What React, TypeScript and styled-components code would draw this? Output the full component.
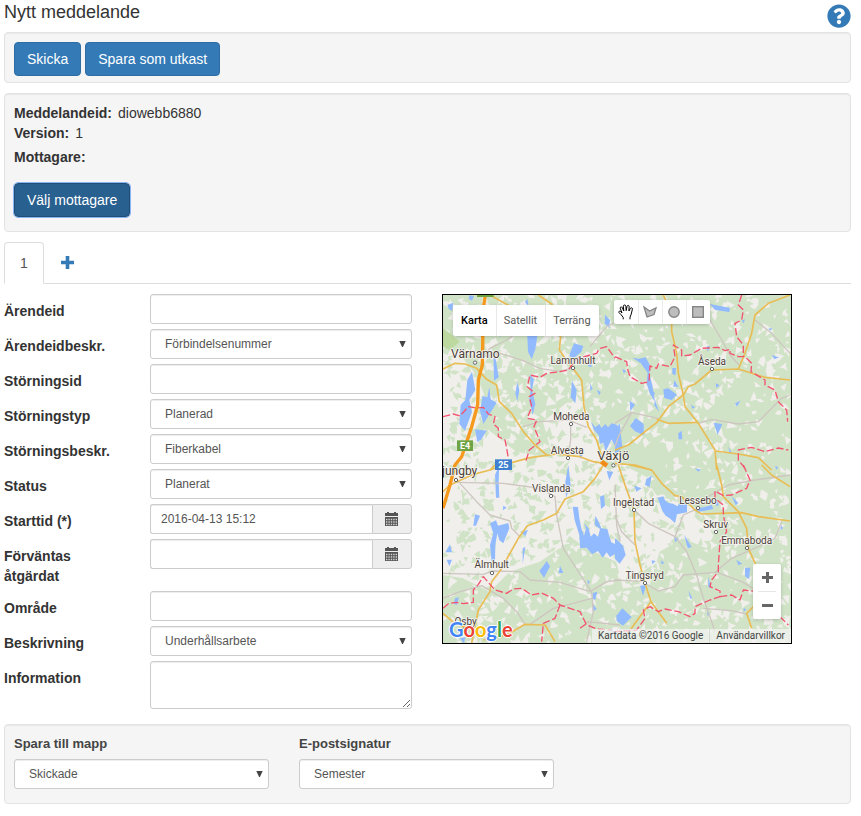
import React, { useId } from "react";
import styled, { createGlobalStyle } from "styled-components";
import { FaQuestionCircle } from "react-icons/fa";

const GlobalStyle = createGlobalStyle`
  *, *::before, *::after { box-sizing: border-box; }
  body {
    margin: 0;
    background: #fff;
    color: #333;
    font-family: "Liberation Sans", Arial, sans-serif;
    font-size: 14px;
    line-height: 20px;
  }
`;

/* ---------- page parts ---------- */

const Page = styled.main`
  padding: 0 10px 12px 4px;
`;

const Header = styled.header`
  display: flex;
  justify-content: space-between;
  align-items: flex-start;
  height: 32px;
`;

const Title = styled.h1`
  margin: 0;
  font-size: 18px;
  line-height: 24px;
  font-weight: 400;
`;

const HelpButton = styled.button`
  display: flex;
  margin: 4px 0 0;
  padding: 0;
  border: 0;
  background: none;
  color: #337ab7;
  font-size: 24px;
`;

const Well = styled.section<{ $bottom: number }>`
  margin-bottom: 10px;
  padding: 9px 9px ${(p) => p.$bottom}px;
  border: 1px solid #e3e3e3;
  border-radius: 4px;
  background: #f5f5f5;
  box-shadow: inset 0 1px 1px rgba(0, 0, 0, 0.05);
`;

const ButtonRow = styled.div`
  display: flex;
  gap: 4px;
`;

const Button = styled.button<{ $active?: boolean }>`
  height: 34px;
  padding: 0 12px;
  border: 1px solid ${(p) => (p.$active ? "#204d74" : "#2e6da4")};
  border-radius: 4px;
  background: ${(p) => (p.$active ? "#286090" : "#337ab7")};
  color: #fff;
  font: inherit;
  ${(p) => p.$active && "outline: 1px solid #8ab4f8;"}
`;

const Facts = styled.dl`
  margin: 0 0 16px;
`;

const Fact = styled.div<{ $spaced?: boolean }>`
  display: flex;
  gap: 6px;
  margin-top: ${(p) => (p.$spaced ? 4 : 0)}px;

  dt { font-weight: 700; }
  dd { margin: 0; }
`;

const Tabs = styled.nav`
  display: flex;
  align-items: flex-end;
  height: 42px;
  margin-bottom: 10px;
  border-bottom: 1px solid #ddd;
`;

const Tab = styled.button`
  width: 40px;
  height: 42px;
  margin-bottom: -1px;
  padding: 0;
  border: 1px solid #ddd;
  border-bottom-color: #fff;
  border-radius: 4px 4px 0 0;
  background: #fff;
  color: #555;
  font: inherit;
`;

const AddTab = styled.button`
  display: flex;
  align-items: center;
  justify-content: center;
  width: 47px;
  height: 42px;
  padding: 0;
  border: 0;
  background: none;
  color: #337ab7;
`;

const Columns = styled.div`
  display: grid;
  grid-template-columns: minmax(0, 408px) minmax(0, 350px);
  gap: 30px;
  align-items: start;
  margin-bottom: 15px;
`;

const Form = styled.form`
  display: grid;
  gap: 5px;
`;

const Row = styled.div`
  display: grid;
  grid-template-columns: 110px minmax(0, 1fr);
  column-gap: 36px;
  align-items: start;
`;

const RowLabel = styled.label`
  padding-top: 7px;
  font-weight: 700;
`;

const Input = styled.input`
  display: block;
  width: 100%;
  min-width: 0;
  height: 30px;
  padding: 0 10px;
  border: 1px solid #ccc;
  border-radius: 3px;
  background: #fff;
  box-shadow: inset 0 1px 1px rgba(0, 0, 0, 0.075);
  color: #555;
  font-family: inherit;
  font-size: 12px;
`;

const TextArea = styled.textarea`
  display: block;
  width: 100%;
  height: 48px;
  padding: 5px 10px;
  border: 1px solid #ccc;
  border-radius: 3px;
  box-shadow: inset 0 1px 1px rgba(0, 0, 0, 0.075);
  color: #555;
  font-family: inherit;
  font-size: 12px;
  resize: vertical;
`;

const SelectBox = styled.div`
  position: relative;

  svg {
    position: absolute;
    top: 12px;
    right: 6px;
    pointer-events: none;
  }
`;

const SelectInput = styled.select`
  display: block;
  width: 100%;
  height: 30px;
  padding: 0 24px 0 14px;
  border: 1px solid #ccc;
  border-radius: 3px;
  appearance: none;
  background: #fff;
  box-shadow: inset 0 1px 1px rgba(0, 0, 0, 0.075);
  color: #555;
  font-family: inherit;
  font-size: 12px;
`;

const InputGroup = styled.div`
  display: flex;

  input {
    flex: 1;
    border-right: 0;
    border-radius: 3px 0 0 3px;
  }
`;

const AddOn = styled.button`
  display: flex;
  align-items: center;
  justify-content: center;
  width: 40px;
  height: 30px;
  padding: 0 2px 0 0;
  border: 1px solid #ccc;
  border-radius: 0 3px 3px 0;
  background: #eee;
  color: #555;
`;

const FooterFields = styled.div`
  display: grid;
  grid-template-columns: repeat(2, minmax(0, 255px));
  column-gap: 30px;
`;

const FooterLabel = styled.label`
  display: block;
  margin-bottom: 5px;
  color: #444;
  font-size: 13px;
  font-weight: 700;
`;

function Select({ id, value }: { id: string; value: string }) {
  return (
    <SelectBox>
      <SelectInput id={id} defaultValue={value}>
        <option>{value}</option>
      </SelectInput>
      <svg width="7" height="6" viewBox="0 0 7 6" aria-hidden="true">
        <path d="M0.3 0H6.7L3.9 6H3.1Z" fill="#444" />
      </svg>
    </SelectBox>
  );
}

function CalendarIcon() {
  return (
    <svg width="13" height="14" viewBox="0 0 13 14" aria-hidden="true">
      <path d="M0 1H2V0H4V1H9V0H11V1H13V4H0Z" fill="currentColor" />
      <path d="M0 5H13V14H0Z" fill="currentColor" />
      <path d="M1 7.5H12M1 10H12M1 12.5H12" stroke="#d4d4d4" strokeWidth="1.6" strokeDasharray="1.4 1" />
    </svg>
  );
}

type Kind = "text" | "select" | "date" | "area";

function Field({ label, kind, value = "" }: { label: string; kind: Kind; value?: string }) {
  const id = useId();
  return (
    <Row>
      <RowLabel htmlFor={id}>{label}</RowLabel>
      {kind === "text" && <Input id={id} type="text" defaultValue={value} />}
      {kind === "select" && <Select id={id} value={value} />}
      {kind === "area" && <TextArea id={id} />}
      {kind === "date" && (
        <InputGroup>
          <Input id={id} type="text" defaultValue={value} />
          <AddOn type="button" aria-label={`Välj datum: ${label}`}>
            <CalendarIcon />
          </AddOn>
        </InputGroup>
      )}
    </Row>
  );
}

const fields: { label: string; kind: Kind; value?: string }[] = [
  { label: "Ärendeid", kind: "text" },
  { label: "Ärendeidbeskr.", kind: "select", value: "Förbindelsenummer" },
  { label: "Störningsid", kind: "text" },
  { label: "Störningstyp", kind: "select", value: "Planerad" },
  { label: "Störningsbeskr.", kind: "select", value: "Fiberkabel" },
  { label: "Status", kind: "select", value: "Planerat" },
  { label: "Starttid (*)", kind: "date", value: "2016-04-13 15:12" },
  { label: "Förväntas åtgärdat", kind: "date" },
  { label: "Område", kind: "text" },
  { label: "Beskrivning", kind: "select", value: "Underhållsarbete" },
  { label: "Information", kind: "area" },
];

/* ---------- map ---------- */

const MapFrame = styled.div`
  position: relative;
  width: 100%;
  border: 1px solid #000;
  overflow: hidden;
  font-family: Roboto, "Liberation Sans", sans-serif;
`;

const MapDrawing = styled.svg`
  display: block;
  width: 100%;
  height: auto;
`;

const TownName = styled.text`
  fill: #4b3d38;
  stroke: #f5f5f0;
  stroke-width: 5px;
  stroke-linejoin: round;
  paint-order: stroke;
`;

const MapTypes = styled.div`
  position: absolute;
  top: 10px;
  left: 10px;
  display: flex;
  height: 31px;
  border-radius: 2px;
  background: #fff;
  box-shadow: 0 1px 4px -1px rgba(0, 0, 0, 0.3);
`;

const MapType = styled.button<{ $on?: boolean }>`
  padding: 0 8px;
  border: 0;
  background: none;
  color: ${(p) => (p.$on ? "#000" : "#565656")};
  font-family: inherit;
  font-size: 11px;
  font-weight: ${(p) => (p.$on ? 500 : 400)};

  & + & {
    padding-left: 7px;
    border-left: 1px solid #e8e8e8;
  }
`;

const DrawTools = styled.div`
  position: absolute;
  top: 5px;
  left: 171px;
  display: flex;
  border-radius: 2px;
  background: #fff;
  box-shadow: 0 1px 4px -1px rgba(0, 0, 0, 0.3);
`;

const DrawTool = styled.button`
  display: flex;
  align-items: center;
  justify-content: center;
  width: 24px;
  height: 24px;
  padding: 0 1px 0 0;
  border: 0;
  background: none;

  & + & { border-left: 1px solid #ececec; }
`;

const ZoomControl = styled.div`
  position: absolute;
  right: 10px;
  bottom: 24px;
  width: 28px;
  padding: 0 5px;
  border-radius: 2px;
  background: #fff;
  box-shadow: 0 1px 4px -1px rgba(0, 0, 0, 0.3);
`;

const ZoomButton = styled.button`
  display: flex;
  align-items: center;
  justify-content: center;
  width: 18px;
  height: 27px;
  padding: 0;
  border: 0;
  background: none;

  & + & { height: 28px; border-top: 1px solid #e6e6e6; }
`;

const Attribution = styled.div`
  position: absolute;
  right: 0;
  bottom: 0;
  display: flex;
  background: rgba(245, 245, 245, 0.7);
  color: #444;
  font-size: 10px;
  line-height: 14px;

  span, a { padding: 0 6px; white-space: nowrap; }
  a { border-left: 1px solid rgba(210, 210, 205, 0.8); color: #444; text-decoration: none; }
`;

const Logo = styled.a`
  position: absolute;
  left: 6px;
  bottom: 1px;
  font-family: Lato, "Open Sans", sans-serif;
  font-size: 20px;
  font-weight: 700;
  line-height: 26px;
  text-decoration: none;
  text-shadow: 1px 0 #fff, -1px 0 #fff, 0 1px #fff, 0 -1px #fff;
`;

const LogoLetter = styled.span<{ $color: string }>`
  color: ${(p) => p.$color};
`;

const logoLetters: [string, string][] = [
  ["G", "#4285f4"], ["o", "#ea4335"], ["o", "#fbbc05"],
  ["g", "#4285f4"], ["l", "#34a853"], ["e", "#ea4335"],
];

/* Each tile covers a quarter of the map and has its own coordinate origin. */
type Tile = { x: number; y: number; lakes: string[]; yellow: string[]; grey: string[]; border: string[] };

const tiles: Tile[] = [
  {
    x: -9, y: -15,
    lakes: [
      "22,45 40,38 36,62 27,58", "262,138 292,138 286,178 275,208 264,185", "160,185 168,212 176,262 162,272",
      "96,245 106,300 88,330 96,366 75,422 58,402 62,345 76,330 82,270", "148,290 152,328 170,338 145,378 130,402 120,362 128,318 142,322",
      "105,418 140,422 124,448 112,456", "270,254 282,268 276,300 286,342 278,376 268,330 272,300", "396,272 410,300 406,340 392,322",
      "402,160 430,168 424,186 398,206 388,196",
      "453,395 466,412 478,402 484,414 496,402 504,412 515,400 530,404 540,420 540,448 526,470 514,448 505,468 497,485 490,458 480,462 476,436 462,420",
      "495,74 510,90 508,114 494,100", "232,276 238,300 232,334 226,310", "88,16 102,18 96,32 86,26", "255,36 262,26 266,50",
      "448,205 458,208 454,232 444,228", "380,60 388,64 382,78", "416,484 428,492 422,508", "178,120 188,128 180,142",
      "470,300 482,306 478,316", "450,280 458,296 452,302",
    ],
    yellow: [
      "9,237 45,220 75,222 110,235 140,268 170,285 178,335 215,370 250,425 285,465 320,495",
      "295,15 335,42 362,90 362,140 358,180 375,205 398,234 425,270 432,350 445,410 470,450 490,515",
      "150,540 215,518 270,503 350,492 420,500 460,515 492,520", "150,15 230,60 262,90",
    ],
    grey: [
      "128,200 150,175 200,150 290,90", "128,198 180,190 250,212 300,236 360,244 398,234",
      "250,410 300,395 385,390 440,412", "383,504 392,450 392,402", "315,90 350,135 362,140", "450,170 500,110 540,90",
    ],
    border: [
      "9,380 40,372 60,378 85,350 108,354 130,352 145,372 165,380 160,402 175,415 175,440 195,450 200,475 205,505",
      "258,512 268,480 300,455 282,410 290,390 262,385 275,350 268,320 285,310 262,290 270,255 300,262 320,250 352,246 385,240 410,205 440,198 470,190 478,176 500,170 525,205",
    ],
  },
  {
    x: 516, y: -15,
    lakes: [
      "52,203 72,206 92,202 106,228 102,250 112,285 120,336 104,310 95,280 98,248 86,232 78,220", "145,298 160,295 186,314 170,330 148,324",
      "172,234 183,234 181,256 172,252", "45,408 62,384 86,402 86,436 60,424", "285,42 345,54 343,66 300,60",
      "296,398 322,402 308,434", "190,430 200,422 202,448 190,448", "0,420 14,400 22,470 0,500", "44,332 60,344 46,364",
      "120,330 132,366 118,346", "178,270 190,290 175,290", "470,196 492,202 478,208", "302,280 314,286 304,294",
      "380,92 390,88 386,100", "228,344 240,352 232,356", "110,300 120,310 112,324", "460,116 472,114 466,122",
      "360,340 376,332 366,350", "340,470 350,488 344,490", "22,236 34,244 26,250", "275,170 285,168 278,186",
    ],
    yellow: [
      "145,15 170,70 170,125 185,190 190,250 205,315 210,350 250,400 300,480 305,540",
      "525,15 460,40 420,75 410,130 390,190 370,237",
      "0,480 40,465 90,425 125,398 160,350 205,315 220,290 240,282 290,240 370,237 450,262 525,270",
      "125,388 160,400 250,397", "300,483 370,492 430,503 470,540", "0,520 60,525 110,540",
    ],
    grey: [
      "285,90 320,150 345,195 372,225", "420,90 470,130 525,190", "0,400 50,368 130,385",
      "250,400 290,388 370,402 430,395 500,325 525,315", "50,368 10,440 0,470",
    ],
    border: [
      "0,200 35,215 38,238 45,260 80,280 102,275 105,228 125,235 130,222 165,230 180,200 175,165 200,180 200,198 225,195 260,175 310,172 330,182 345,178 345,190 370,200 390,200 410,220 408,245 450,270 450,285 480,300 490,335 515,360 518,395",
      "380,15 370,45 385,60 380,90 360,100 365,140 385,165 385,200",
      "390,535 370,510 370,480 410,472 450,485 490,474 520,480",
    ],
  },
  {
    x: -9, y: 510,
    lakes: [
      "165,30 178,0 176,50 178,98 168,98", "480,95 492,90 495,122 483,132",
      "398,125 414,126 418,160 424,190 432,212 438,190 432,175 446,190 452,215 462,205 474,215 480,192 464,180 466,152 476,170 484,190 502,192 508,214 514,232 526,238 540,232 540,285 524,268 510,276 500,262 488,278 474,258 456,268 440,248 420,250 418,210 404,165",
      "150,175 168,166 174,182 205,174 208,190 190,235 178,226 172,205 166,240 165,292 155,290 150,240 160,205",
      "298,318 312,300 320,288 330,304 312,338", "360,302 370,324 356,324", "100,182 105,148 120,152 108,182", "16,262 30,238 36,262",
      "45,400 57,397 50,420 42,416", "20,284 36,284 28,304", "248,250 256,246 248,298", "500,18 520,20 508,46",
      "376,50 385,0 392,60 378,98", "458,384 472,380 466,404 458,402", "458,416 470,432 458,440", "244,202 264,194 256,214",
      "60,520 76,516 72,536", "512,488 530,510 518,508", "190,122 200,128 188,136", "442,345 450,350 444,358",
    ],
    yellow: [
      "490,0 465,40 430,80 375,102 350,145 310,165 262,182 235,220 180,318 155,350 150,380 115,435 95,535",
      "9,445 50,480 95,490", "9,80 30,60 100,28 150,15 165,0", "130,525 200,510 255,478 315,480 345,530",
    ],
    grey: [
      "50,52 190,55 300,70 345,95 350,150 370,250 415,320 455,382 460,440 440,530",
      "60,55 110,110 150,150 210,168 215,190 240,215",
      "9,325 130,328 160,318 240,320 270,345 360,352 450,380 500,350 540,345",
      "9,400 60,380 125,362 190,400 230,440 255,478", "455,400 400,415 340,430 270,478", "525,60 530,180 540,230",
      "440,470 540,480",
    ],
    border: [
      "9,430 25,416 50,412 70,416 100,412 100,375 115,358 130,335 165,375 200,385 220,372 245,370 275,390 305,384 340,400 360,420 390,430 420,440 440,480 470,492 515,495",
      "360,420 345,460 310,475 305,530", "420,490 445,472",
    ],
  },
  {
    x: 516, y: 510,
    lakes: [
      "128,98 145,94 150,106 160,114 174,116 188,124 192,114 216,118 216,142 186,148 180,174 164,160 152,152 142,138", "0,220 10,228 24,242 32,270 14,296 0,282",
      "234,132 270,126 290,120 295,132 245,142", "208,210 230,246 218,250", "58,62 80,70 64,80", "94,42 110,32 104,66 90,60",
      "75,362 94,360 84,392", "4,452 22,430 50,456 24,482 5,468", "390,308 406,308 402,342 390,334", "364,284 382,296 370,300",
      "350,94 370,114 362,120", "280,334 288,370 280,366", "178,214 192,222 180,232", "110,286 122,288 112,298",
      "240,10 258,14 250,20", "140,286 148,294 138,298", "386,428 394,434 386,440", "220,376 232,400 226,402",
      "480,4 490,6 484,14", "276,440 284,446 278,454", "300,95 312,120 304,124", "498,180 504,190 496,194",
    ],
    yellow: [
      "10,0 30,60 57,135 60,230 75,300 90,355 108,410 155,475", "108,410 60,475 48,492",
      "45,0 110,15 140,55 180,92 200,95 240,135 260,147 380,143 430,155 525,168",
      "305,0 320,60 325,95 370,140 395,190 400,250 425,305", "420,420 395,445 410,490", "440,0 470,30 525,65",
    ],
    grey: [
      "57,135 100,175 180,215 215,260 245,330 265,400 290,470 300,500",
      "90,355 130,378 180,365 205,330 300,322 350,280 430,245 480,220 500,170",
      "180,215 205,150 250,130", "525,30 420,45 340,60 270,100", "265,430 350,437 395,447", "0,345 90,350",
      "300,320 380,350 430,380", "0,150 20,200 60,240",
    ],
    border: [
      "385,0 405,45 395,70 350,90 325,92 300,78 300,100 325,120 325,150 335,200 315,230 310,300 310,320 290,345 285,365 315,378 315,395 285,405 240,425 240,445 225,455 190,440 150,432 130,440 105,425 85,435 90,460 65,495 0,500",
      "315,395 350,390 375,405 385,375 430,380", "495,455 520,480",
    ],
  },
];

/* Light farmland stretches over the west and the middle of the map. */
const openLand: [number, number][][] = [
  [
    [0, 400], [70, 440], [130, 400], [220, 470], [330, 490], [440, 470], [520, 500], [600, 540], [640, 600],
    [760, 640], [830, 690], [790, 760], [720, 730], [650, 770], [620, 870], [540, 880], [520, 800], [430, 760],
    [350, 760], [290, 800], [200, 830], [140, 890], [60, 850], [0, 840],
  ],
  [[0, 200], [60, 190], [100, 240], [140, 340], [70, 440], [0, 420]],
  [[300, 380], [400, 300], [440, 360], [470, 480], [330, 490]],
];

const inside = (x: number, y: number, poly: [number, number][]) =>
  poly.reduce((hit, [ax, ay], i) => {
    const [bx, by] = poly[(i + 1) % poly.length];
    return ay > y !== by > y && x < ((bx - ax) * (y - ay)) / (by - ay) + ax ? !hit : hit;
  }, false);

/* Small irregular patches, the same on each load. */
function makePatches() {
  let seed = 4211;
  const rand = () => {
    seed = (seed * 16807) % 2147483647;
    return seed / 2147483647;
  };
  const light: string[] = [];
  const green: string[] = [];
  for (let i = 0; i < 2600; i++) {
    const x = rand() * 1044;
    const y = rand() * 1044;
    const r = 6 + rand() * 12;
    const start = rand() * 6.28;
    const count = 3 + Math.floor(rand() * 4);
    const points: string[] = [];
    for (let k = 0; k < count; k++) {
      const a = start + (k / count) * 6.28;
      const d = r * (k % 2 ? 0.25 + rand() * 0.4 : 0.7 + rand() * 0.6);
      points.push(`${Math.round(x + Math.cos(a) * d)},${Math.round(y + Math.sin(a) * d)}`);
    }
    const d = `M${points.join("L")}Z`;
    const chance = rand();
    if (openLand.some((poly) => inside(x, y, poly))) {
      if (chance < 0.62) green.push(d);
    } else if (chance < (x < 500 && y < 500 ? 0.72 : 0.45)) {
      light.push(d);
    }
  }
  return { light: light.join(""), green: green.join("") };
}

const patches = makePatches();

const towns: { name: string; x: number; y: number; dotX: number; dotY: number; size?: number }[] = [
  { name: "Värnamo", x: 97, y: 190, dotX: 96, dotY: 203, size: 36 },
  { name: "Lammhult", x: 390, y: 206, dotX: 390, dotY: 219 },
  { name: "Moheda", x: 385, y: 374, dotX: 384, dotY: 387 },
  { name: "Alvesta", x: 373, y: 476, dotX: 375, dotY: 489 },
  { name: "Växjö", x: 511, y: 495, dotX: 511, dotY: 511, size: 39 },
  { name: "Åseda", x: 807, y: 209, dotX: 807, dotY: 222 },
  { name: "jungby", x: 50, y: 541, dotX: 39, dotY: 555, size: 36 },
  { name: "Vislanda", x: 325, y: 590, dotX: 324, dotY: 603 },
  { name: "Ingelstad", x: 572, y: 632, dotX: 573, dotY: 645 },
  { name: "Lessebo", x: 765, y: 626, dotX: 765, dotY: 639 },
  { name: "Skruv", x: 818, y: 698, dotX: 819, dotY: 711 },
  { name: "Emmaboda", x: 911, y: 746, dotX: 912, dotY: 759 },
  { name: "Älmhult", x: 146, y: 820, dotX: 147, dotY: 834 },
  { name: "Tingsryd", x: 605, y: 851, dotX: 606, dotY: 864 },
  { name: "Osby", x: 68, y: 990, dotX: 62, dotY: 1004 },
];

function AreaMap() {
  return (
    <MapDrawing viewBox="0 0 1044 1044" role="img" aria-label="Karta över Växjö">
      <rect width="1044" height="1044" fill="#d0e3c7" />
      {openLand.map((p) => <polygon key={p.join()} points={p.join(" ")} fill="#f1efec" />)}
      <path d={patches.light} fill="#f1efec" />
      <path d={patches.green} fill="#d0e3c7" />
      <path d="M0 100L30 122L50 140L20 165L0 155Z" fill="#bdd99f" />
      {tiles.map((t) => (
        <g key={`${t.x},${t.y}`} transform={`translate(${t.x} ${t.y})`} fill="none" strokeLinejoin="round">
          {t.lakes.map((p) => <polygon key={p} points={p} fill="#91baff" />)}
          {t.grey.map((p) => <polyline key={p} points={p} stroke="#cec6c0" strokeWidth="4" />)}
          {t.yellow.map((p) => <polyline key={p} points={p} stroke="#e9bd55" strokeWidth="5" />)}
          {t.border.map((p) => (
            <polyline key={p} points={p} stroke="#f4536f" strokeWidth="4" strokeDasharray="22 8" />
          ))}
        </g>
      ))}
      <path d="M127 0L121 40L118 210L106 255L104 330L86 395L56 485L36 510L21 570L0 640" fill="none" stroke="#f59a1d" strokeWidth="10" />
      <path d="M475 500L492 512" stroke="#f08c1a" strokeWidth="14" />
      <g fontFamily="Roboto, sans-serif" textAnchor="middle">
        <rect x="102" y="-20" width="50" height="26" fill="#6ea443" />
        <rect x="42" y="436" width="48" height="32" fill="#6ea443" />
        <rect x="156" y="493" width="51" height="32" fill="#3f7fd0" />
        <g fontSize="27" fontWeight="700" fill="#fff">
          <text x="66" y="461">E4</text>
          <text x="181" y="518">25</text>
        </g>
        {towns.map((t) => (
          <g key={t.name}>
            <circle cx={t.dotX} cy={t.dotY} r="5" fill="#fff" stroke="#666" strokeWidth="3" />
            <TownName x={t.x} y={t.y} fontSize={t.size ?? 30}>{t.name}</TownName>
          </g>
        ))}
      </g>
    </MapDrawing>
  );
}

function MapPanel() {
  return (
    <MapFrame>
      <AreaMap />
      <MapTypes>
        <MapType type="button" $on>Karta</MapType>
        <MapType type="button">Satellit</MapType>
        <MapType type="button">Terräng</MapType>
      </MapTypes>
      <DrawTools>
        <DrawTool type="button" aria-label="Panorera">
          <svg width="16" height="16" viewBox="0 0 16 16" fill="#fff" stroke="#000" strokeLinejoin="round">
            <path d="M5.2 15.3V13.4L3.2 10.8L1 8.6C.4 7.4 1.6 6.7 2.6 7.5L4 9L2.2 4.2C2 2.8 3.7 2.4 4.3 3.7L5.8 7L5.3 2.2C5.4.6 7.5.6 7.9 2.1L8.2 6.6L9 2.4C9.4.9 11.2 1.2 11.2 2.7L10.9 7L12.4 4.4C13.2 3.2 14.8 3.9 14.4 5.2L13.2 10.2L12 13.2V15.3" />
          </svg>
        </DrawTool>
        <DrawTool type="button" aria-label="Rita polygon">
          <svg width="14" height="14" viewBox="0 0 14 14">
            <path d="M1 2L6.5 6L13 3L11 9.5L4 12Z" fill="#bdbdbd" stroke="#858585" strokeWidth="1.3" />
          </svg>
        </DrawTool>
        <DrawTool type="button" aria-label="Rita cirkel">
          <svg width="12" height="12" viewBox="0 0 12 12">
            <circle cx="6" cy="6" r="5.2" fill="#bdbdbd" stroke="#858585" strokeWidth="1.4" />
          </svg>
        </DrawTool>
        <DrawTool type="button" aria-label="Rita rektangel">
          <svg width="12" height="12" viewBox="0 0 12 12">
            <rect x=".7" y=".7" width="10.6" height="10.6" fill="#bdbdbd" stroke="#858585" strokeWidth="1.4" />
          </svg>
        </DrawTool>
      </DrawTools>
      <Logo href="#" aria-label="Google">
        {logoLetters.map(([letter, color], i) => (
          <LogoLetter key={i} $color={color}>{letter}</LogoLetter>
        ))}
      </Logo>
      <Attribution>
        <span>Kartdata ©2016 Google</span>
        <a href="#">Användarvillkor</a>
      </Attribution>
      <ZoomControl>
        <ZoomButton type="button" aria-label="Zooma in">
          <svg width="11" height="11" viewBox="0 0 11 11">
            <path d="M5.5 0V11M0 5.5H11" stroke="#666" strokeWidth="3" />
          </svg>
        </ZoomButton>
        <ZoomButton type="button" aria-label="Zooma ut">
          <svg width="11" height="3" viewBox="0 0 11 3">
            <path d="M0 1.5H11" stroke="#666" strokeWidth="3" />
          </svg>
        </ZoomButton>
      </ZoomControl>
    </MapFrame>
  );
}

export default function App() {
  return (
    <>
      <GlobalStyle />
      <Page>
        <Header>
          <Title>Nytt meddelande</Title>
          <HelpButton type="button" aria-label="Hjälp">
            <FaQuestionCircle />
          </HelpButton>
        </Header>

        <Well $bottom={6}>
          <ButtonRow>
            <Button type="button">Skicka</Button>
            <Button type="button">Spara som utkast</Button>
          </ButtonRow>
        </Well>

        <Well $bottom={14}>
          <Facts>
            <Fact><dt>Meddelandeid:</dt><dd>diowebb6880</dd></Fact>
            <Fact><dt>Version:</dt><dd>1</dd></Fact>
            <Fact $spaced><dt>Mottagare:</dt><dd /></Fact>
          </Facts>
          <ButtonRow>
            <Button type="button" $active>Välj mottagare</Button>
          </ButtonRow>
        </Well>

        <Tabs>
          <Tab type="button">1</Tab>
          <AddTab type="button" aria-label="Lägg till">
            <svg width="13" height="13" viewBox="0 0 13 13" aria-hidden="true">
              <path d="M6.5 0V13M0 6.5H13" stroke="currentColor" strokeWidth="3.6" />
            </svg>
          </AddTab>
        </Tabs>

        <Columns>
          <Form>
            {fields.map((f) => <Field key={f.label} {...f} />)}
          </Form>
          <MapPanel />
        </Columns>

        <Well $bottom={14}>
          <FooterFields>
            <div>
              <FooterLabel htmlFor="folder">Spara till mapp</FooterLabel>
              <Select id="folder" value="Skickade" />
            </div>
            <div>
              <FooterLabel htmlFor="signature">E-postsignatur</FooterLabel>
              <Select id="signature" value="Semester" />
            </div>
          </FooterFields>
        </Well>
      </Page>
    </>
  );
}
